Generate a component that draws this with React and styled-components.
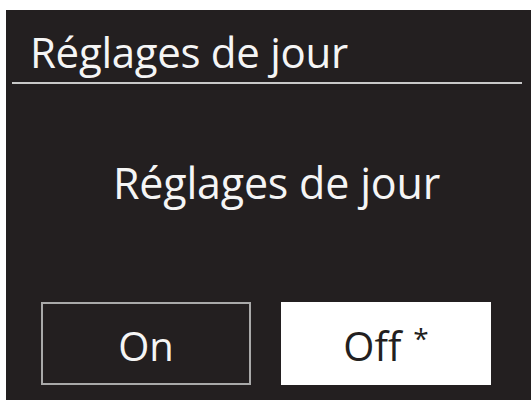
import React from "react";
import styled, { createGlobalStyle } from "styled-components";

const Global = createGlobalStyle`
  html, body { margin: 0; padding: 0; background: #ffffff; }
  body { width: 531px; height: 400px; overflow: hidden; }
`;

const Screen = styled.div`
  margin: 10px 0 0 6px;
  width: 525px;
  height: 390px;
  background: #231f20;
  color: #f5f5f5;
  font-family: "Open Sans", "Noto Sans", sans-serif;
  display: flex;
  flex-direction: column;
  box-sizing: border-box;
`;

const Header = styled.div`
  height: 72px;
  padding-left: 24px;
  box-sizing: border-box;
  display: flex;
  align-items: flex-end;
  font-size: 42px;
  line-height: 1;
  padding-bottom: 9px;
  letter-spacing: -0.3px;
`;

const Rule = styled.div`
  height: 2px;
  margin: 0 9px 0 6px;
  background: #c8c8c8;
`;

const Message = styled.div`
  flex: 1;
  display: flex;
  align-items: center;
  justify-content: center;
  font-size: 43px;
  letter-spacing: -0.2px;
  padding-bottom: 22px;
  padding-left: 16px;
`;

const Buttons = styled.div`
  display: flex;
  gap: 30px;
  padding: 0 35px 15px 35px;
`;

const Choice = styled.div`
  width: 210px;
  height: 83px;
  box-sizing: border-box;
  display: flex;
  align-items: center;
  justify-content: center;
  font-size: 40px;
  padding-top: 4px;
  border: 2px solid ${(p) => (p.$selected ? "#ffffff" : "#a9a9a9")};
  background: ${(p) => (p.$selected ? "#ffffff" : "transparent")};
  color: ${(p) => (p.$selected ? "#231f20" : "#f5f5f5")};
`;

const Mark = styled.span`
  font-size: 28px;
  line-height: 1;
  align-self: flex-start;
  margin-top: 16px;
  margin-left: 12px;
`;

export default function App() {
  return (
    <>
      <Global />
      <Screen>
        <Header>Réglages de jour</Header>
        <Rule />
        <Message>Réglages de jour</Message>
        <Buttons>
          <Choice>On</Choice>
          <Choice $selected>
            Off<Mark>*</Mark>
          </Choice>
        </Buttons>
      </Screen>
    </>
  );
}
